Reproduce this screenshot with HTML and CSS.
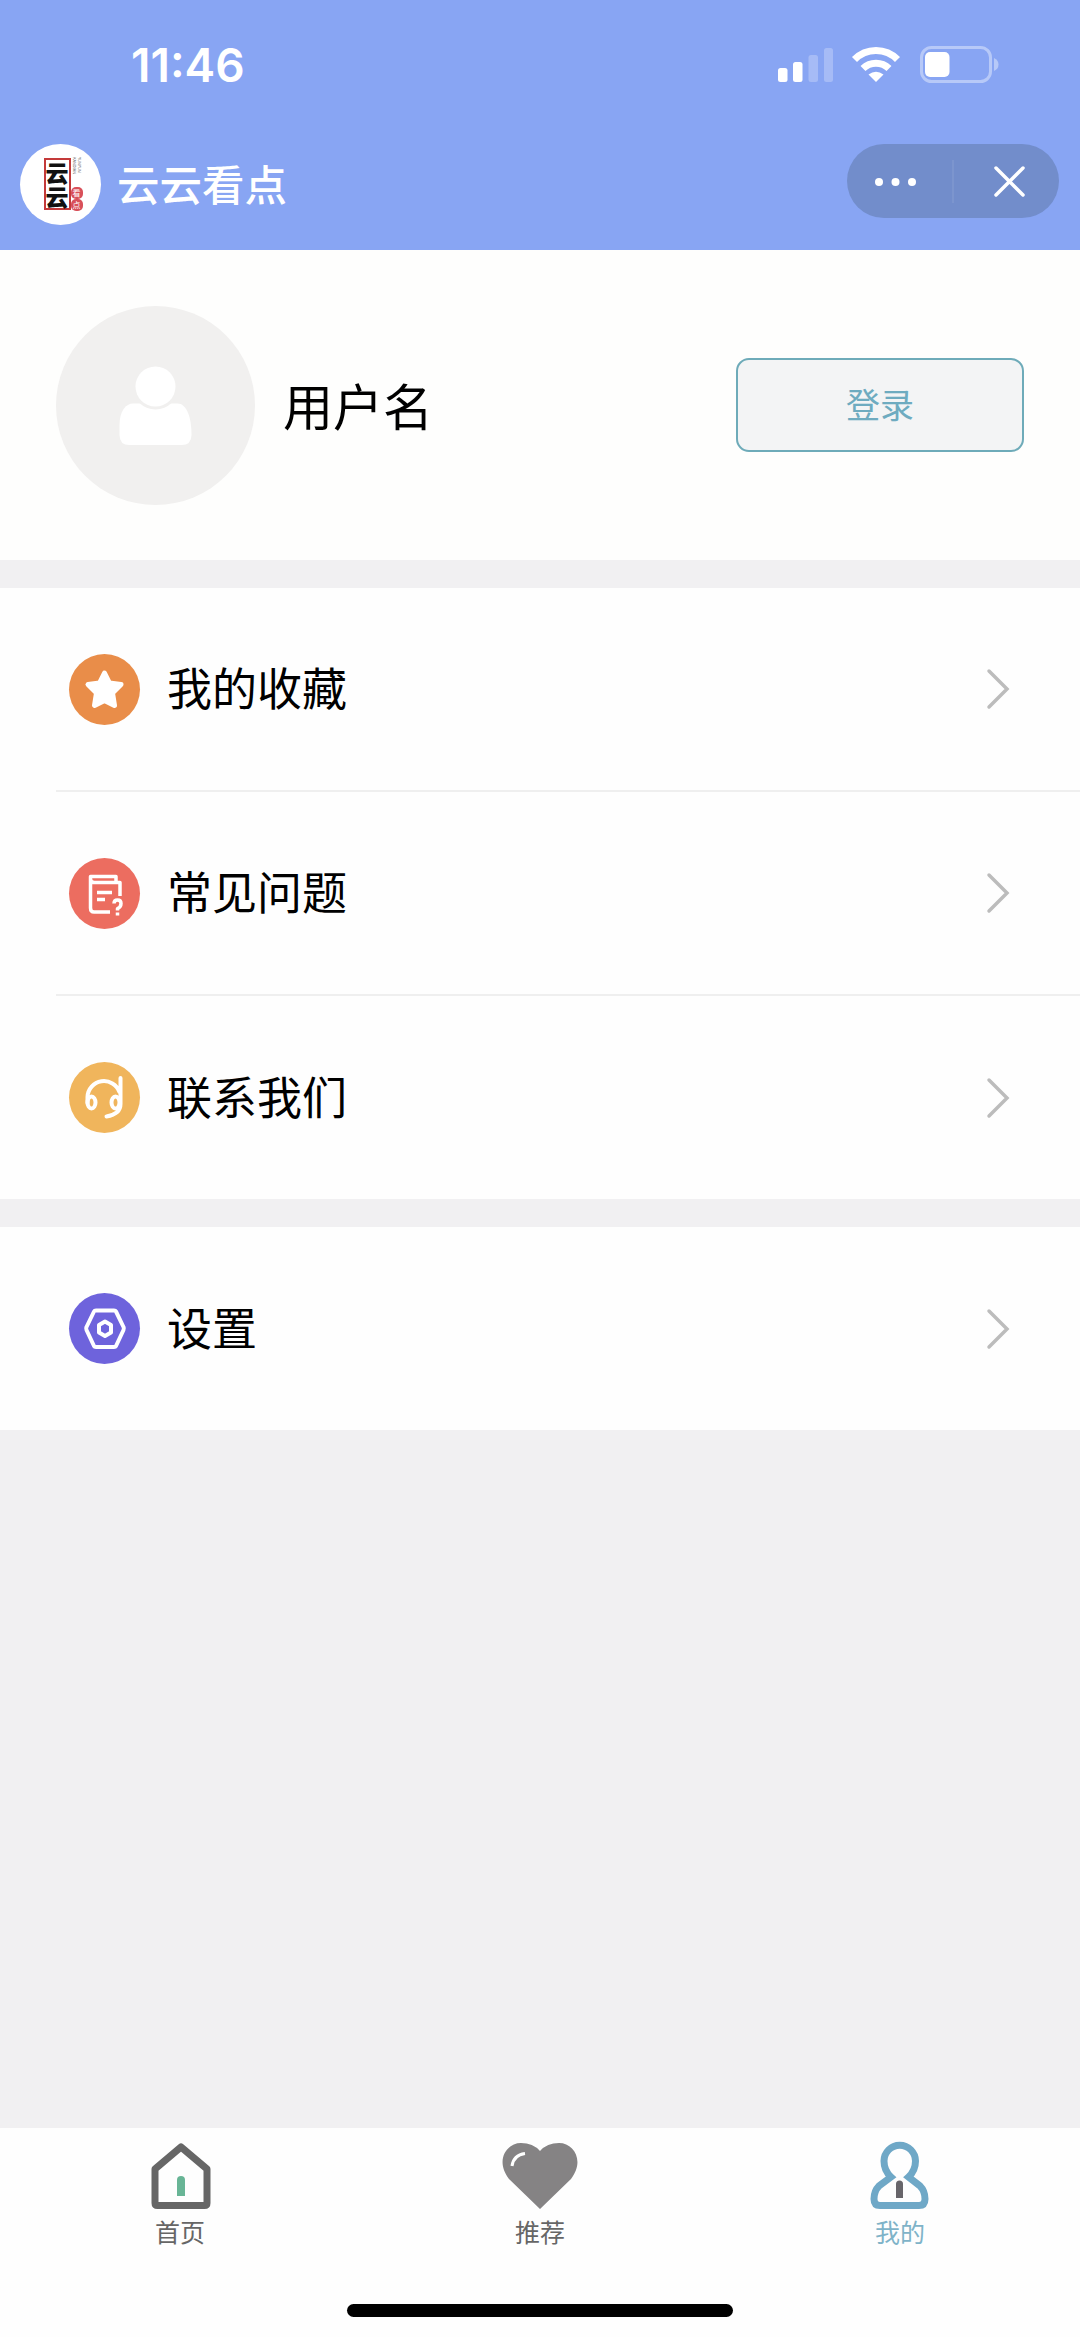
FILE: index.html
```html
<!DOCTYPE html>
<html lang="zh-CN">
<head>
    <meta charset="UTF-8">
    <meta name="viewport" content="width=device-width, initial-scale=1.0">
    <title>云云看点</title>
    <link rel="stylesheet" href="styles.css">
</head>
<body>
    <header class="header">
        <div class="status-bar">
            <span class="time">11:46</span>
            <svg class="status-icons" width="222" height="40" viewBox="0 0 222 40">
                <g fill="#fff">
                    <rect x="0" y="24" width="9.5" height="14" rx="2.5"/>
                    <rect x="15" y="18" width="9.5" height="20" rx="2.5"/>
                    <rect x="30.5" y="11" width="9.5" height="27" rx="2.5" opacity=".25"/>
                    <rect x="46" y="4" width="9" height="34" rx="2.5" opacity=".25"/>
                </g>
                <g fill="none" stroke="#fff" stroke-width="7">
                    <path d="M76.5 15.500a30 30 0 0 1 43 0"/>
                    <path d="M85 24.500a18.500 18.500 0 0 1 26 0"/>
                </g>
                <path d="M90.500 30.500q7.500-5.500 15 0L98 38z" fill="#fff"/>
                <rect x="143.500" y="3.500" width="69" height="34" rx="10" fill="none" stroke="#fff" stroke-width="3" opacity=".4"/>
                <rect x="147" y="8" width="24.500" height="25" rx="5" fill="#fff"/>
                <path d="M216 14q4.500 2 4.500 6.500t-4.500 6.500z" fill="#fff" opacity=".4"/>
            </svg>
        </div>
        <div class="nav-bar">
            <div class="logo">
                <span class="logo-name">云云</span>
                <span class="logo-side">
                    <span class="logo-pinyin">YUNYUN<br>KANDIAN</span>
                    <span class="logo-seal"><i>看</i><i>点</i></span>
                </span>
            </div>
            <h1 class="title">云云看点</h1>
            <div class="capsule">
                <svg width="212" height="74" viewBox="0 0 212 74">
                    <g fill="#fff">
                        <circle cx="32" cy="38" r="4"/>
                        <circle cx="48.500" cy="38" r="4"/>
                        <circle cx="65" cy="38" r="4"/>
                    </g>
                    <path d="M106 16v43" stroke="#fff" stroke-width="1" opacity=".15"/>
                    <path d="M149 24l27 27M176 24l-27 27" stroke="#fff" stroke-width="3.500" stroke-linecap="round"/>
                </svg>
            </div>
        </div>
    </header>

    <main class="content">
        <section class="profile">
            <svg class="avatar" viewBox="0 0 199 199">
                <circle cx="99.500" cy="99.500" r="99.500" fill="#f1f0ef"/>
                <path d="M77 97.500C70 97.500 63.500 105 63.500 119v10q0 10 10 10h52q10 0 10-10c0-18-5-31.500-14-31.500z" fill="#fff"/>
                <circle cx="99.500" cy="80.500" r="23" fill="#f1f0ef"/>
                <circle cx="99.500" cy="80.500" r="20" fill="#fff"/>
            </svg>
            <span class="username">用户名</span>
            <button class="login-btn">登录</button>
        </section>

        <section class="menu">
            <div class="menu-item">
                <svg class="menu-icon" viewBox="0 0 71 71">
                    <circle cx="35.500" cy="35.500" r="35.500" fill="#e98d49"/>
                    <path d="M35.500 19l5 10 11.500 1.500-8.500 8.500 2 12.500-10-5-10 5 2-12.500L19 30.500 30.500 29z" fill="#fff" stroke="#fff" stroke-width="5" stroke-linejoin="round"/>
                </svg>
                <span class="menu-text">我的收藏</span>
                <svg class="arrow" viewBox="0 0 24 42"><path d="M3 3l18 18L3 39"/></svg>
            </div>
            <div class="menu-item">
                <svg class="menu-icon" viewBox="0 0 71 71">
                    <circle cx="35.500" cy="35.500" r="35.500" fill="#ec6d60"/>
                    <g fill="none" stroke="#fff" stroke-width="3.500" stroke-linejoin="round">
                        <path d="M41 54H25q-3.500 0-3.500-4V18.500h25.500V24M21.500 21q0 3.500 4 3.500h25.500V38"/>
                        <path d="M28 34.500h15M28 41.500h8"/>
                        <path d="M45 45.500q0-3.500 3.500-3.500t3.500 3.500-3.500 5v2M48.500 54.500v3"/>
                    </g>
                </svg>
                <span class="menu-text">常见问题</span>
                <svg class="arrow" viewBox="0 0 24 42"><path d="M3 3l18 18L3 39"/></svg>
            </div>
            <div class="menu-item">
                <svg class="menu-icon" viewBox="0 0 71 71">
                    <circle cx="35.500" cy="35.500" r="35.500" fill="#f0b55c"/>
                    <g fill="none" stroke="#fff" stroke-width="4" stroke-linecap="round">
                        <path d="M18.500 41v-6a16.500 16.500 0 0 1 32-5M51.500 16v26q0 10-14 12.500"/>
                        <ellipse cx="22.500" cy="40.500" rx="4" ry="6"/>
                        <ellipse cx="46.500" cy="40.500" rx="4" ry="6"/>
                    </g>
                </svg>
                <span class="menu-text">联系我们</span>
                <svg class="arrow" viewBox="0 0 24 42"><path d="M3 3l18 18L3 39"/></svg>
            </div>
        </section>

        <section class="menu">
            <div class="menu-item">
                <svg class="menu-icon" viewBox="0 0 71 71">
                    <circle cx="35.500" cy="35.500" r="35.500" fill="#6e63dc"/>
                    <g fill="none" stroke="#fff" stroke-width="4" stroke-linejoin="round">
                        <path d="M27 17.500h18q1.500 0 2 1l7.500 15.500q.8 1.500 0 3L47 53q-.5 1-2 1H27q-1.500 0-2-1L17.500 37q-.8-1.500 0-3L25 18.500q.5-1 2-1z"/>
                        <path d="M36 28.500l6 3.500v7.500L36 43l-6-3.500V32z"/>
                    </g>
                </svg>
                <span class="menu-text">设置</span>
                <svg class="arrow" viewBox="0 0 24 42"><path d="M3 3l18 18L3 39"/></svg>
            </div>
        </section>
    </main>

    <footer class="footer">
        <nav class="tab-bar">
            <a class="tab">
                <svg class="tab-icon" viewBox="0 0 80 70">
                    <path d="M41 4L67 26v34q0 2.500-2.500 2.500h-47Q15 62.500 15 60V26z" fill="none" stroke="#666" stroke-width="7" stroke-linejoin="round"/>
                    <path d="M37 53V37q0-4 4-4t4 4v16z" fill="#68b596"/>
                </svg>
                <span>首页</span>
            </a>
            <a class="tab">
                <svg class="tab-icon" viewBox="0 0 80 70">
                    <path d="M40 66L9 36C-5 18 6 0 21 0q12 0 19 8 7-8 19-8c15 0 26 18 12 36z" fill="#858384"/>
                    <path d="M12 23q1.500-11 13-12.500" fill="none" stroke="#fff" stroke-width="3"/>
                </svg>
                <span>推荐</span>
            </a>
            <a class="tab tab-active">
                <svg class="tab-icon" viewBox="0 0 80 70">
                    <path d="M31 34C24.500 28 24 22 24 18a15.700 15.700 0 0 1 31.500 0c0 4-.5 10-7 16L60 43c4 4 5 8 5 13q0 6.500-6 6.500H20q-6 0-6-6.500c0-5 1-9 5-13z" fill="none" stroke="#6fa8c7" stroke-width="7"/>
                    <path d="M36 55V41q0-3.500 3.500-3.500T43 41v14z" fill="#67656a"/>
                </svg>
                <span>我的</span>
            </a>
        </nav>
        <div class="home-indicator"></div>
    </footer>
</body>
</html>
```
FILE: styles.css
```css
* {
    margin: 0;
    padding: 0;
    box-sizing: border-box;
}

body {
    width: 100vw;
    height: 100vh;
    background-color: #f1f0f2;
    display: flex;
    flex-direction: column;
    overflow: hidden;
    font-family: 'Noto Sans CJK SC', sans-serif;
    color: #000;
}

svg {
    display: block;
    flex-shrink: 0;
    overflow: visible;
}

/* Header */
.header {
    height: 250px;
    background-color: #88a5f3;
    color: #fff;
}

.status-bar {
    height: 130px;
    padding: 0 80px 0 131px;
    display: flex;
    justify-content: space-between;
    align-items: center;
}

.time {
    font-family: 'Inter', sans-serif;
    font-size: 46px;
    font-weight: 600;
}

.status-icons {
    margin-bottom: 3px;
}

.nav-bar {
    height: 108px;
    padding: 0 21px 0 20px;
    display: flex;
    align-items: center;
}

.logo {
    width: 81px;
    height: 81px;
    padding-left: 5px;
    border-radius: 50%;
    background-color: #fff;
    display: flex;
    justify-content: center;
    align-items: center;
}

.logo-name {
    width: 27px;
    height: 52px;
    border: 2px solid #c43a3a;
    color: #111;
    font-size: 23px;
    font-weight: 900;
    line-height: 24px;
    text-align: center;
}

.logo-side {
    height: 54px;
    display: flex;
    flex-direction: column;
    justify-content: space-between;
    align-items: center;
}

.logo-pinyin {
    color: #555;
    font-size: 4px;
    line-height: 5px;
    writing-mode: vertical-rl;
}

.logo-seal i {
    display: block;
    width: 12px;
    height: 12px;
    border-radius: 5px;
    background-color: #d8505a;
    font-size: 8px;
    font-style: normal;
    line-height: 12px;
    text-align: center;
}

.title {
    margin-left: 16px;
    font-size: 42.5px;
    font-weight: 500;
    line-height: 60px;
    padding-bottom: 2px;
}

.capsule {
    width: 212px;
    height: 74px;
    margin-left: auto;
    margin-bottom: 6px;
    border-radius: 37px;
    background-color: #728dcb;
}

/* Profile */
.profile {
    height: 310px;
    padding: 0 56px;
    display: flex;
    align-items: center;
    background-color: #fefefd;
}

.avatar {
    width: 199px;
    height: 199px;
}

.username {
    margin-left: 28px;
    padding-bottom: 3px;
    font-size: 50px;
}

.login-btn {
    width: 288px;
    height: 94px;
    margin-left: auto;
    padding-bottom: 4px;
    border: 2px solid #6eabb9;
    border-radius: 13px;
    background-color: #f3f4f5;
    color: #6eabc0;
    font-family: inherit;
    font-size: 34px;
}

/* Menu */
.menu {
    margin-top: 28px;
    background-color: #fefefe;
}

.menu-item {
    height: 204px;
    margin-left: 56px;
    padding: 0 70px 0 13px;
    display: flex;
    align-items: center;
    border-bottom: 2px solid #efefef;
}

.menu-item:last-child {
    height: 203px;
    border-bottom: none;
}

.menu-icon {
    width: 71px;
    height: 71px;
}

.menu-text {
    margin-left: 27px;
    padding-bottom: 5px;
    font-size: 45px;
}

.arrow {
    width: 24px;
    height: 42px;
    margin-left: auto;
    fill: none;
    stroke: #bcbcbc;
    stroke-width: 3.5;
    stroke-linecap: round;
}

/* Tab bar */
.footer {
    height: 209px;
    margin-top: auto;
    background-color: #fefefe;
}

.tab-bar {
    height: 176px;
    display: flex;
}

.tab {
    flex: 1;
    padding-top: 15px;
    display: flex;
    flex-direction: column;
    align-items: center;
    color: #666;
    font-size: 25px;
    line-height: 36px;
}

.tab-icon {
    width: 80px;
    height: 70px;
}

.tab-active {
    color: #7fb3c8;
}

.home-indicator {
    width: 386px;
    height: 13px;
    margin: 0 auto;
    border-radius: 7px;
    background-color: #000;
}
```
